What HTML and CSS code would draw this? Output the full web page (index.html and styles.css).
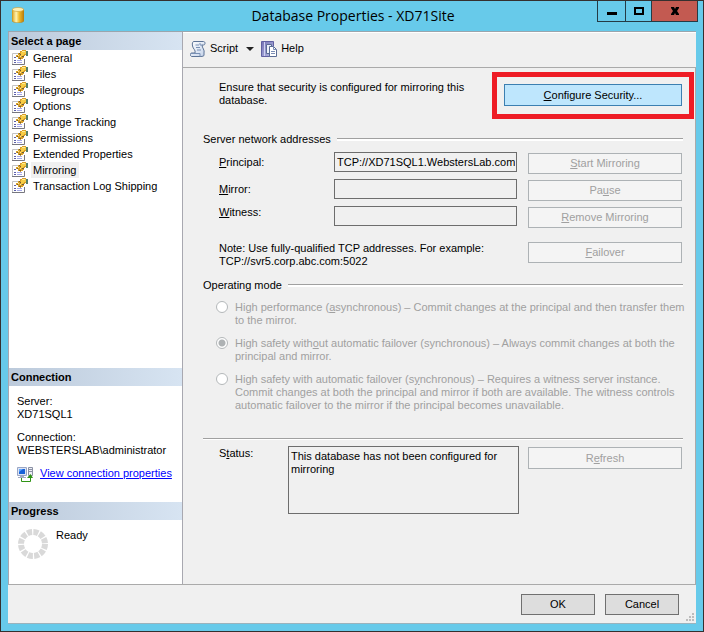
FILE: index.html
```html
<!DOCTYPE html>
<html lang="en">
<head>
<meta charset="utf-8">
<title>Database Properties - XD71Site</title>
<link rel="stylesheet" href="styles.css">
</head>
<body>
<svg class="defs" aria-hidden="true">
  <defs>
    <linearGradient id="gold" x1="0" x2="1" y1="0" y2="0">
      <stop offset="0" stop-color="#d9a01c"/><stop offset=".35" stop-color="#fff3b0"/><stop offset=".6" stop-color="#f0bc2c"/><stop offset="1" stop-color="#b97a0a"/>
    </linearGradient>
    <linearGradient id="paper" x1="0" x2="1" y1="0" y2="1">
      <stop offset="0" stop-color="#ffffff"/><stop offset="1" stop-color="#c3d2ea"/>
    </linearGradient>
    <linearGradient id="book" x1="0" x2="1" y1="0" y2="1">
      <stop offset="0" stop-color="#7472b4"/><stop offset="1" stop-color="#b9bce6"/>
    </linearGradient>
    <symbol id="page" viewBox="0 0 16 16">
      <path d="M0 3h12v11H0z" fill="#fff"/>
      <path d="M.5 14V3.500H6" fill="none" stroke="#c3c3c3"/>
      <path d="M0 14.500h12.500V9" fill="none" stroke="#77777f"/>
      <path d="M2 7.500h2M2 10.500h2M2 12.500h2" stroke="#5c60a8"/>
      <path d="M5 10.500h5M5 12.500h5" stroke="#a5a8e8"/>
      <path d="M4 5h2V3h2V1h2V0h4v1h1v4h-2v1h-1v2h-1v1h-2v1H8V9H6V7H4z" fill="#d9a029"/>
      <path d="M9 2h1V1h4v3h-2v1h-1v1H9z" fill="#f7cd45"/>
      <path d="M10 1h3v1h-3zM6 5h1v1H6zM8 6h1v1H8z" fill="#ffec96"/>
      <path d="M5 6h1v1H5zM7 8h2v1H7zM10 6h2v1h-2zM7 3h1v1H7zM8 4h1v1H8z" fill="#6e5c33"/>
      <path d="M14 1h2v5h-2z" fill="#56806a"/>
    </symbol>
  </defs>
</svg>
<div class="window">
  <header class="titlebar">
    <svg class="app-icon" viewBox="0 0 12 16" aria-hidden="true">
      <path d="M0 2.500v11c0 3 12 3 12 0v-11z" fill="url(#gold)" stroke="#b07d17" stroke-width=".5"/>
      <ellipse cx="6" cy="2.500" rx="5.700" ry="2" fill="#fff1b4" stroke="#c99a32" stroke-width=".6"/>
    </svg>
    <h1>Database Properties - XD71Site</h1>
    <div class="caption-buttons">
      <button type="button" class="minimize" aria-label="Minimize"><svg viewBox="0 0 10 10"><path d="M0 6h10v3H0z"/></svg></button>
      <button type="button" class="maximize" aria-label="Maximize"><svg viewBox="0 0 10 10"><path d="M0 1h10v8H0zM2 3v4h6V3z" fill-rule="evenodd"/></svg></button>
      <button type="button" class="close" aria-label="Close"><svg viewBox="0 0 10 10"><path d="M1 1h3l1 2 1-2h3v1L7 5l2 3v1H6L5 7 4 9H1V8l2-3-2-3z"/></svg></button>
    </div>
  </header>

  <div class="client">
    <div class="workspace">
      <aside class="sidebar">
        <nav class="pages">
          <h2>Select a page</h2>
          <ul>
            <li><svg><use href="#page"/></svg><a href="#general">General</a></li>
            <li><svg><use href="#page"/></svg><a href="#files">Files</a></li>
            <li><svg><use href="#page"/></svg><a href="#filegroups">Filegroups</a></li>
            <li><svg><use href="#page"/></svg><a href="#options">Options</a></li>
            <li><svg><use href="#page"/></svg><a href="#tracking">Change Tracking</a></li>
            <li><svg><use href="#page"/></svg><a href="#permissions">Permissions</a></li>
            <li><svg><use href="#page"/></svg><a href="#extended">Extended Properties</a></li>
            <li><svg><use href="#page"/></svg><a href="#mirroring" class="current" aria-current="page">Mirroring</a></li>
            <li><svg><use href="#page"/></svg><a href="#shipping">Transaction Log Shipping</a></li>
          </ul>
        </nav>
        <section class="connection">
          <h2>Connection</h2>
          <dl>
            <dt>Server:</dt><dd>XD71SQL1</dd>
            <dt>Connection:</dt><dd>WEBSTERSLAB\administrator</dd>
          </dl>
          <div class="connection-link">
            <svg viewBox="0 0 16 16" aria-hidden="true">
              <path d="M.5.500h9v8h-9z" fill="#dce4f5" stroke="#9aa6c4"/><path d="M2 2h6v5H2z" fill="#1762d8"/><path d="M2 2h4L2 5z" fill="#62a8ff"/>
              <path d="M3 9h4v1h2v1H1v-1h2z" fill="#a3abc2"/>
              <path d="M11.500.500h4v8h-4z" fill="#eef0f6" stroke="#8b91a5"/><path d="M12 2.500h3M12 4.500h3" stroke="#8b91a5"/>
              <path d="M4.500 11v3.500h9V9" fill="none" stroke="#2f9415"/><path d="M10 11l3.500-4 2.500 4z" fill="#2f9415"/>
            </svg>
            <a href="#connection">View connection properties</a>
          </div>
        </section>
        <section class="progress">
          <h2>Progress</h2>
          <div class="progress-state">
            <svg viewBox="0 0 30 30" aria-hidden="true"><circle cx="15" cy="15" r="12" fill="none" stroke="#d9d9d9" stroke-width="6" stroke-dasharray="5 1.283"/></svg>
            <span>Ready</span>
          </div>
        </section>
      </aside>

      <main>
        <div class="toolbar">
          <button type="button">
            <svg viewBox="0 0 16 16" aria-hidden="true">
              <path d="M4 .5h9.500c2 0 2 3.500 0 3.500H12c0 3 3 5 2 8v2.500c-1 1-3 1-4 1H1.500C0 15 0 12 1.500 12H5c1-3-2-4-2.500-7C2 2 2.500.500 4 .5z" fill="url(#paper)" stroke="#5c7396"/>
              <path d="M12 4h-2V2M1 12.500h9v3M5.500 4H9M6 6.500h4M7 9h4" fill="none" stroke="#7890b5"/>
            </svg>
            Script
            <span class="arrow"></span>
          </button>
          <button type="button">
            <svg viewBox="0 0 16 16" aria-hidden="true">
              <path d="M.5.500h12v15H.5z" fill="url(#book)" stroke="#6160a2"/><path d="M3.500 1v14" stroke="#d0d2f2"/>
              <path d="M5.500 3.500h5v9h-5z" fill="#edf1fa" stroke="#5a6b94"/>
              <path d="M8.500 5.500h4l3 3v7h-7z" fill="#fff" stroke="#5a6b94"/><path d="M12.500 5.500v3h3M10 10.500h4M10 12.500h4" fill="none" stroke="#7b8db5"/>
            </svg>
            Help
          </button>
        </div>

        <form class="panel">
          <div class="intro">
            <p>Ensure that security is configured for mirroring this database.</p>
            <div class="callout"><button type="button" class="primary"><u>C</u>onfigure Security...</button></div>
          </div>

          <section class="addresses">
            <h3>Server network addresses</h3>
            <div class="columns">
              <div class="fields">
                <div class="field"><label for="principal"><u>P</u>rincipal:</label><input id="principal" type="text" value="TCP://XD71SQL1.WebstersLab.com" readonly></div>
                <div class="field"><label for="mirror"><u>M</u>irror:</label><input id="mirror" type="text" readonly></div>
                <div class="field raised"><label for="witness"><u>W</u>itness:</label><input id="witness" type="text" readonly></div>
                <p class="note">Note: Use fully-qualified TCP addresses. For example: TCP://svr5.corp.abc.com:5022</p>
              </div>
              <div class="actions">
                <button type="button" disabled><u>S</u>tart Mirroring</button>
                <button type="button" disabled>Pa<u>u</u>se</button>
                <button type="button" disabled><u>R</u>emove Mirroring</button>
                <button type="button" class="failover" disabled><u>F</u>ailover</button>
              </div>
            </div>
          </section>

          <section class="mode">
            <h3>Operating mode</h3>
            <div class="options">
              <label><input type="radio" name="mode" disabled><span>High performance (<u>a</u>synchronous) – Commit changes at the principal and then transfer them<br>to the mirror.</span></label>
              <label><input type="radio" name="mode" checked disabled><span>High safety with<u>o</u>ut automatic failover (synchronous) – Always commit changes at both the<br>principal and mirror.</span></label>
              <label><input type="radio" name="mode" disabled><span>High safety with automatic failover (s<u>y</u>nchronous) – Requires a witness server instance.<br>Commit changes at both the principal and mirror if both are available. The witness controls<br>automatic failover to the mirror if the principal becomes unavailable.</span></label>
            </div>
          </section>

          <section class="status">
            <label for="status">S<u>t</u>atus:</label>
            <textarea id="status" readonly>This database has not been configured for mirroring</textarea>
            <button type="button" disabled>R<u>e</u>fresh</button>
          </section>
        </form>
      </main>
    </div>

    <footer>
      <button type="button">OK</button>
      <button type="button">Cancel</button>
      <svg class="grip" viewBox="0 0 8 8" aria-hidden="true"><path d="M6 0h2v2H6zM3 3h2v2H3zM6 3h2v2H6zM0 6h2v2H0zM3 6h2v2H3zM6 6h2v2H6z" fill="#bcbcbc"/></svg>
    </footer>
  </div>
</div>
</body>
</html>
```
FILE: styles.css
```css
* {
  box-sizing: border-box;
}

body {
  margin: 0;
  font: 11px/13px "Liberation Sans", Arial, sans-serif;
  color: #000;
}

h1, h2, h3, p, ul, dl, dd {
  margin: 0;
  padding: 0;
}

button, input, textarea {
  font: inherit;
  color: inherit;
  margin: 0;
  border-radius: 0;
}

button {
  padding: 0;
}

.defs {
  position: absolute;
  width: 0;
  height: 0;
}

.window {
  display: flex;
  flex-direction: column;
  min-height: 100vh;
  padding: 0 7px 7px;
  border: 1px solid #35302f;
  background: #67caea;
}

.titlebar {
  display: grid;
  grid-template-columns: 101px 1fr 101px;
  height: 30px;
  margin-right: -2px;
}

.app-icon {
  width: 12px;
  height: 16px;
  margin: 6px 4px;
}

h1 {
  font: 14px/29px "Open Sans", "Noto Sans", sans-serif;
  text-align: center;
}

.caption-buttons {
  display: flex;
  height: 21px;
  border: 1px solid #243b45;
  border-top: 0;
}

.caption-buttons button {
  display: flex;
  flex: 28 0 0;
  align-items: center;
  justify-content: center;
  border: 0;
  background: none;
}

.caption-buttons button + button {
  border-left: 1px solid #243b45;
}

.caption-buttons .maximize {
  flex-grow: 26;
}

.caption-buttons .close {
  flex-grow: 46;
  background: #c35a51;
}

.caption-buttons svg {
  width: 10px;
  height: 10px;
}

.client {
  display: flex;
  flex: 1;
  flex-direction: column;
  border-top: 1px solid #9aa5ad;
  border-bottom: 1px solid #9bb3bd;
  background: #f0f0f0;
}

.workspace {
  display: flex;
  flex: 1;
  border-bottom: 1px solid #aaa;
}

.sidebar {
  display: flex;
  flex: 0 0 175px;
  flex-direction: column;
  border: 1px solid #a8a8b0;
  border-width: 0 1px;
  background: #fff;
}

.pages {
  flex: 1;
}

h2 {
  padding: 3px 2px 2px;
  font-size: 11px;
  line-height: 13px;
  background: linear-gradient(to right, #bccadb, #d7e4f2);
}

.pages ul {
  list-style: none;
}

.pages li {
  display: flex;
  align-items: center;
  gap: 3px;
  height: 16px;
  padding-left: 3px;
}

.pages svg {
  width: 16px;
  height: 16px;
}

.pages a {
  padding: 2px 3px 1px 2px;
  color: inherit;
  text-decoration: none;
}

.pages .current {
  background: #f0f0f0;
}

dl {
  padding: 9px 8px 0;
}

dd {
  margin-bottom: 10px;
}

.connection-link {
  display: flex;
  gap: 7px;
  padding: 0 8px 19px;
}

.connection-link svg {
  width: 16px;
  height: 16px;
}

.connection-link a {
  color: #00f;
}

.progress-state {
  display: flex;
  gap: 8px;
  height: 64px;
  padding: 9px;
}

.progress-state svg {
  width: 30px;
  height: 30px;
}

main {
  display: flex;
  flex: 1;
  flex-direction: column;
  min-width: 0;
}

.toolbar {
  display: flex;
  gap: 7px;
  height: 36px;
  padding: 0 7px 3px;
  border-top: 1px solid #fff;
  border-bottom: 1px solid #aaa;
}

.toolbar button {
  display: flex;
  align-items: center;
  gap: 4px;
  border: 0;
  background: none;
}

.toolbar svg {
  width: 16px;
  height: 16px;
}

.arrow {
  margin-left: 4px;
  border: 4px solid transparent;
  border-top-color: #222;
  border-bottom: 0;
}

.panel {
  flex: 1;
  padding: 0 12px 0 20px;
  border-right: 1px solid #aaa;
}

.intro {
  display: flex;
  justify-content: space-between;
  padding: 13px 1px 26px 16px;
}

.intro p {
  width: 250px;
}

.callout {
  position: relative;
  width: 178px;
  height: 22px;
  margin-top: 3px;
}

.callout::after {
  content: "";
  position: absolute;
  inset: -12px -12px -13px;
  border: 5px solid #ee1c25;
  pointer-events: none;
}

.callout button {
  width: 100%;
  height: 100%;
  border: 1px solid #3c7fb1;
  background: #bee6fd;
}

h3 {
  display: flex;
  align-items: center;
  gap: 6px;
  font-size: 11px;
  font-weight: normal;
  line-height: 13px;
}

h3::after {
  content: "";
  flex: 1;
  height: 2px;
  border-top: 1px solid #a0a0a0;
  background: #fff;
}

.columns {
  display: grid;
  grid-template-columns: 1fr 154px;
  gap: 11px;
  padding: 6px 1px 0 16px;
}

.fields {
  display: flex;
  flex-direction: column;
  gap: 7px;
}

.field {
  display: grid;
  grid-template-columns: 115px 1fr;
  align-items: center;
}

.field.raised {
  align-items: start;
}

.field input {
  width: 100%;
  height: 20px;
  padding: 0 1px 0 2px;
  border: 1px solid #6d6d6d;
  background: #f0f0f0;
}

.note {
  width: 270px;
  padding-top: 9px;
}

.actions {
  display: flex;
  flex-direction: column;
  gap: 6px;
  padding-top: 1px;
}

.actions button {
  height: 21px;
}

.actions .failover {
  margin-top: 8px;
}

.panel button:disabled {
  border: 1px solid #adb2b5;
  color: #a0a0a0;
  background: #f4f4f4;
}

.mode {
  padding-top: 11px;
}

.options {
  display: flex;
  flex-direction: column;
  gap: 10px;
  padding: 9px 0 26px 13px;
}

.options label {
  display: flex;
  gap: 7px;
  color: #a0a0a0;
  white-space: nowrap;
}

.options input {
  appearance: none;
  flex: none;
  width: 12px;
  height: 12px;
  border: 1px solid #b4b8ba;
  border-radius: 50%;
  background: #fff;
}

.options input:checked {
  background: radial-gradient(circle, #aeb2b4 3px, #fff 4px);
}

.status {
  display: grid;
  grid-template-columns: 69px 1fr 9px 154px;
  align-items: start;
  padding: 7px 1px 0 16px;
  border-top: 1px solid #a0a0a0;
  box-shadow: inset 0 1px #fff;
}

.status label, .status button {
  margin-top: 1px;
}

.status textarea {
  width: 100%;
  height: 68px;
  padding: 3px 2px;
  border: 1px solid #6d6d6d;
  background: #f0f0f0;
  resize: none;
  overflow: hidden;
}

.status button {
  grid-column: 4;
  height: 22px;
}

footer {
  position: relative;
  display: flex;
  justify-content: flex-end;
  gap: 10px;
  padding: 9px 17px 8px;
}

footer button {
  width: 74px;
  height: 21px;
  border: 1px solid #707070;
  background: #ddd;
}

.grip {
  position: absolute;
  right: 2px;
  bottom: 2px;
  width: 8px;
  height: 8px;
}
```
